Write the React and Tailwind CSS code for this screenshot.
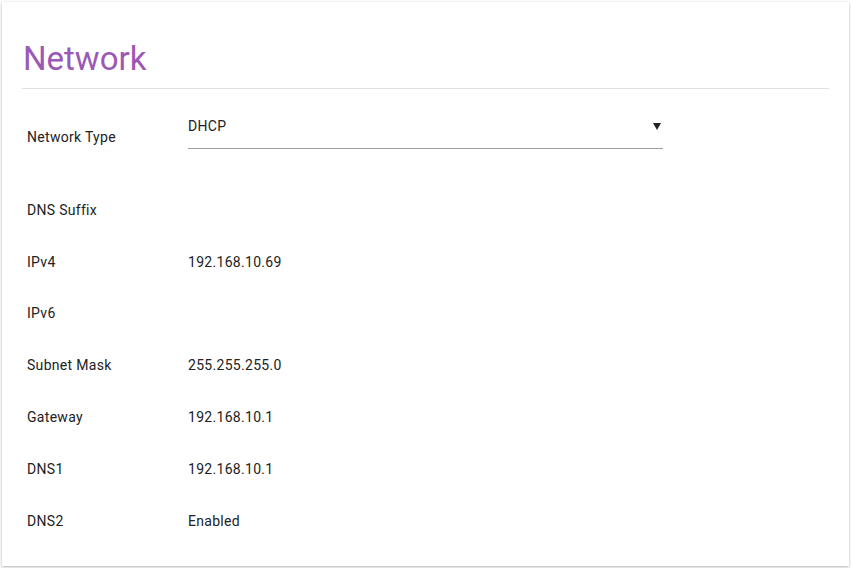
import React from "react";

const rows = [
  { label: "DNS Suffix", value: "" },
  { label: "IPv4", value: "192.168.10.69" },
  { label: "IPv6", value: "" },
  { label: "Subnet Mask", value: "255.255.255.0" },
  { label: "Gateway", value: "192.168.10.1" },
  { label: "DNS1", value: "192.168.10.1" },
  { label: "DNS2", value: "Enabled" },
];

const App = () => {
  return (
    <div className="p-[2px] bg-white font-['Roboto',sans-serif] text-[#222]">
      <div className="h-[564px] bg-white px-5 shadow-[0_1px_3px_rgba(0,0,0,0.3)]">
        {/* Title */}
        <h1 className="pt-[36px] pb-[8px] text-[33px] leading-[42px] text-[#9b59b6] border-b border-[#e0e0e0] pl-[1px]">
          Network
        </h1>

        {/* Network type select */}
        <div className="flex items-start mt-[27px] tracking-[0.3px]">
          <div className="w-[166px] pl-[5px] mt-[11px] text-sm leading-5">Network Type</div>
          <div className="w-[475px] flex items-center justify-between pb-3 border-b border-[#9e9e9e] text-sm leading-5">
            <span>DHCP</span>
            <svg width="8" height="8" viewBox="0 0 8 8" className="mr-[2px]">
              <polygon points="0,1 8,1 4,8" fill="#222" />
            </svg>
          </div>
        </div>

        {/* Info rows */}
        <div className="mt-[35px] tracking-[0.3px]">
          {rows.map((r) => (
            <div key={r.label} className="flex items-center h-[51.8px] text-sm">
              <div className="w-[166px] pl-[5px]">{r.label}</div>
              <div>{r.value}</div>
            </div>
          ))}
        </div>
      </div>
    </div>
  );
};

export default App;
